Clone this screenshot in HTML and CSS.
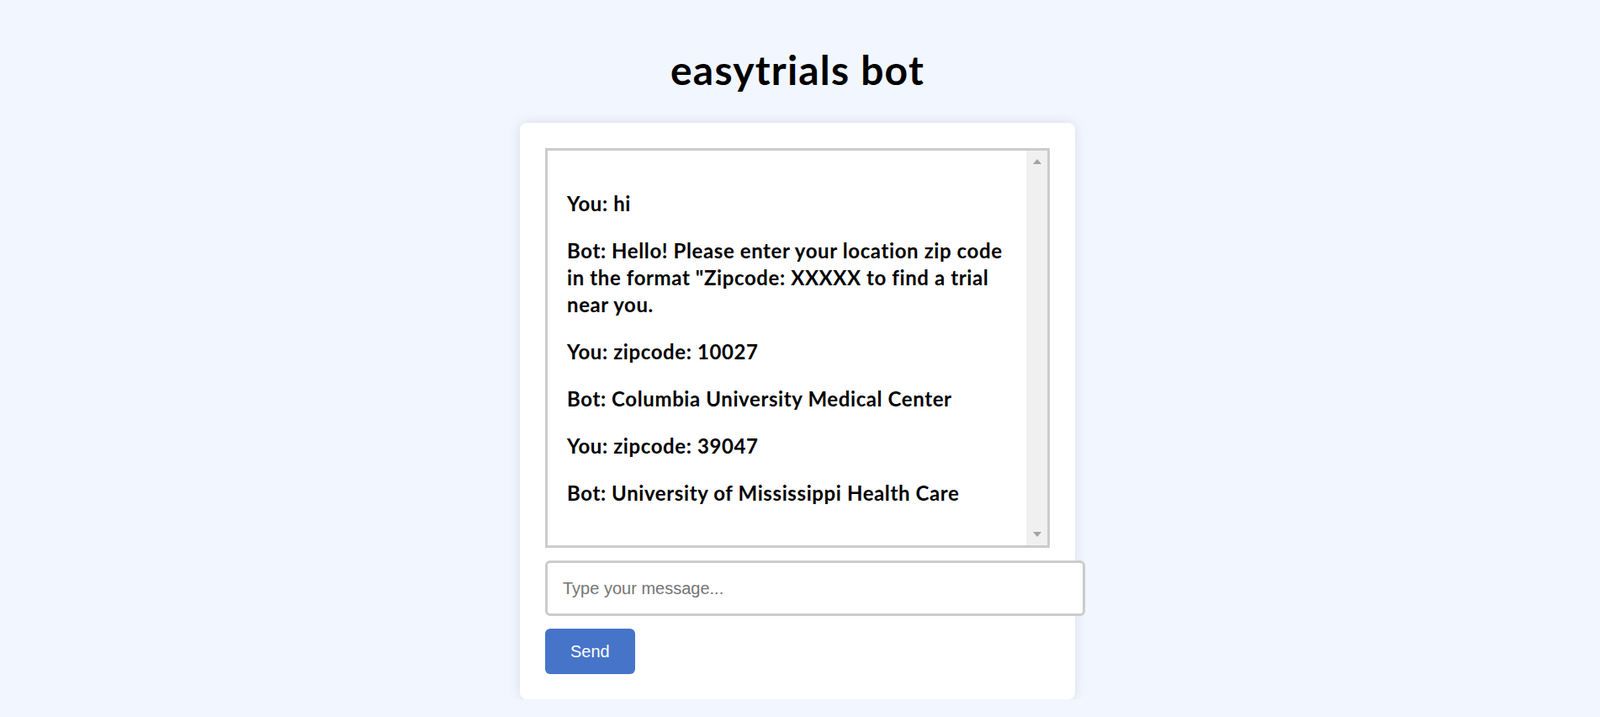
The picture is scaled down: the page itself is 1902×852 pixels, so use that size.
FILE: index.html
```html
<!DOCTYPE html>
<html lang="en">
<head>
<meta charset="utf-8">
<title>easytrials bot</title>
<link rel="stylesheet" href="styles.css">
</head>
<body>
  <h1 class="title">easytrials bot</h1>
  <div class="card">
    <div class="chat">
      <div class="messages">
        <p class="msg">You: hi</p>
        <p class="msg">Bot: Hello! Please enter your location zip code in the format "Zipcode: XXXXX to find a trial near you.</p>
        <p class="msg">You: zipcode: 10027</p>
        <p class="msg">Bot: Columbia University Medical Center</p>
        <p class="msg">You: zipcode: 39047</p>
        <p class="msg">Bot: University of Mississippi Health Care</p>
      </div>
      <div class="scrollbar">
        <span class="arrow arrow-up"></span>
        <span class="arrow arrow-down"></span>
      </div>
    </div>
    <input class="message-input" type="text" placeholder="Type your message...">
    <button class="send-btn" type="button">Send</button>
  </div>
</body>
</html>
```
FILE: styles.css
```css
html, body {
  margin: 0;
}

body {
  background: #f1f6ff;
  padding: 51px 6px 0 0;
  font-family: "Lato", "Noto Sans", sans-serif;
  color: #000;
}

.title {
  margin: 0 0 31px;
  text-align: center;
  font-family: "Lato", "Noto Sans", sans-serif;
  font-weight: 700;
  font-size: 48px;
  line-height: 64px;
  letter-spacing: 1.2px;
}

.card {
  width: 600px;
  margin: 0 auto;
  padding: 30px;
  background: #fff;
  border-radius: 8px;
  box-shadow: 0 0 15px rgba(0, 0, 0, 0.1);
}

.chat {
  display: flex;
  width: 600px;
  box-sizing: border-box;
  border: 3px solid #cccccc;
}

.messages {
  flex: 1;
  min-width: 0;
  padding: 23px 10px 22px 23px;
}

.msg {
  margin: 24px 0;
  font-weight: 700;
  font-size: 24px;
  line-height: 32px;
  letter-spacing: 0.6px;
}

.scrollbar {
  width: 25px;
  flex: none;
  background: #f0f0f0;
  display: flex;
  flex-direction: column;
  justify-content: space-between;
  align-items: center;
  padding: 10px 0;
}

.arrow {
  width: 0;
  height: 0;
  border-left: 5.5px solid transparent;
  border-right: 5.5px solid transparent;
}

.arrow-up {
  border-bottom: 6px solid #a3a3a3;
}

.arrow-down {
  border-top: 6px solid #a3a3a3;
}

.message-input {
  display: block;
  width: 600px;
  margin: 15px 0 0;
  padding: 18px;
  border: 3px solid #cccccc;
  border-radius: 6px;
  font-family: "Liberation Sans", Arial, sans-serif;
  font-size: 20px;
  line-height: 24px;
  color: #000;
  background: #fff;
  outline: none;
}

.message-input::placeholder {
  color: #757575;
}

.send-btn {
  display: block;
  margin: 15px 0 0;
  padding: 15px 30px;
  border: none;
  border-radius: 6px;
  background: #4674c9;
  color: #fff;
  font-family: "Liberation Sans", Arial, sans-serif;
  font-size: 20px;
  line-height: 24px;
  cursor: pointer;
}
```
